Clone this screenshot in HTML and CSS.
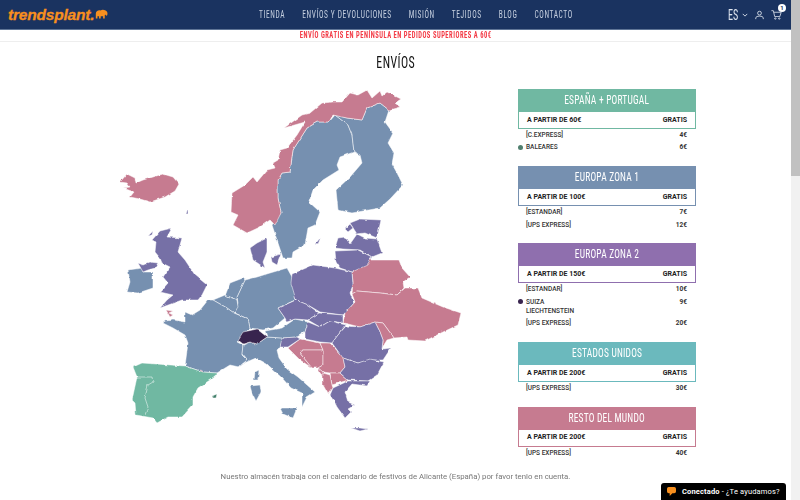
FILE: index.html
```html
<!DOCTYPE html>
<html lang="es">
<head>
<meta charset="utf-8">
<title>Envíos - trendsplant</title>
<link rel="stylesheet" href="styles.css">
</head>
<body>
<div class="shell">
<div class="page">
  <header class="topbar">
    <a class="logo"><span class="logo-text">trendsplant.</span>
      <svg class="logo-mark" viewBox="0 0 16 12"><path d="M1 5C1 2 4 0 7 1c1-1 4-1 6 0 2 1 3 3 2 6-1 1-2 0-2-1l-1 1v4h-2V8H7v3H5V8H3v3H1z"/></svg>
    </a>
    <nav class="nav">
      <a>TIENDA</a><a>ENVÍOS Y DEVOLUCIONES</a><a>MISIÓN</a><a>TEJIDOS</a><a>BLOG</a><a>CONTACTO</a>
    </nav>
    <div class="tools">
      <span class="lang">ES</span>
      <svg class="chev" viewBox="0 0 8 5"><path d="M1 1l3 3 3-3"/></svg>
      <svg class="user" viewBox="0 0 12 12"><circle cx="6" cy="3.5" r="2.5"/><path d="M1 11.5V10c0-1.500 2-2.500 5-2.500s5 1 5 2.500v1.500"/></svg>
      <span class="cart">
        <svg viewBox="0 0 14 13"><path d="M.5 1H3l1.700 7.500h6.500L13 3H3.500"/><circle cx="5.500" cy="11" r=".9"/><circle cx="10.500" cy="11" r=".9"/></svg>
        <b class="badge">1</b>
      </span>
    </div>
  </header>
  <div class="promo"><span>ENVÍO GRATIS EN PENÍNSULA EN PEDIDOS SUPERIORES A 60€</span></div>
  <h1 class="title"><span>ENVÍOS</span></h1>
  <main class="content">
    <svg class="map" viewBox="100 80 380 360" role="img" aria-label="Mapa de zonas de envío de Europa">
      <defs>
        <filter id="coast" x="0" y="0" width="100%" height="100%" color-interpolation-filters="sRGB">
          <feTurbulence type="fractalNoise" baseFrequency="0.16" numOctaves="2" seed="4"/>
          <feDisplacementMap in="SourceGraphic" scale="2.6" xChannelSelector="R" yChannelSelector="G"/>
        </filter>
      </defs>
      <g class="land">
      <g class="blue">
        <path d="M329 122L335 115L348 125L352 135L354 152L340 157L337 165L339 170L323 180L313 190L309 202L320 212L315 225L308 228L305 245L293 252L292 258L283 258L272 225L281 213L278 198L278 180L282 173L290 172L293 150L307 128L317 122Z"/>
        <path d="M335 115L347 118L362 120L367 108L380 103L389 110L385 122L393 133L388 143L394 153L392 164L397 173L403 185L390 199L380 208L352 213L338 210L336 190L350 177L362 163L360 155L354 152L352 135L348 125Z"/>
        <path d="M128 270L142 268L143 272L153 272L153 288L138 293L127 292L130 282Z"/>
        <path d="M257 277L270 273L287 268L292 277L296 293L295 300L278 308L285 318L273 328L263 330L250 328L248 319L235 313L238 303L237 297L245 280Z"/>
        <path d="M225 296L230 283L243 278L245 280L237 297L237 300L225 295Z"/>
        <path d="M213 300L225 295L237 300L238 307L234 313L227 308Z"/>
        <path d="M208 300L213 300L227 308L234 313L248 319L250 328L245 333L237 342L243 345L242 355L247 360L239 367L230 365L217 373L203 372L185 366L188 343L185 335L173 328L163 323L165 321L173 320L185 322L185 312L192 315L200 310Z"/>
        <path d="M243 345L250 342L257 344L267 337L283 338L280 347L277 350L279 358L287 369L298 377L315 392L307 397L302 407L302 393L291 388L282 378L267 364L256 358L242 364L240 367L247 360L242 354Z"/>
        <path d="M280 408L297 408L293 418L283 414Z"/>
        <path d="M250 386L260 385L261 392L256 401L252 393Z"/>
        <path d="M255 372L259 370L258 380L254 380Z"/>
        <path d="M265 331L282 328L295 319L308 322L305 332L297 337L282 338L267 337Z"/>
      </g>
      <g class="pink">
        <path d="M120 182L127 174L135 178L136 183L143 180L153 177L163 174L173 177L179 184L175 191L165 197L150 202L140 199L130 197L134 192L123 188L130 187L127 183Z"/>
        <path d="M233 225L247 233L260 227L270 220L275 225L281 213L278 198L278 180L282 173L290 172L293 150L307 128L317 122L329 122L333 115L347 118L362 120L367 108L380 103L389 110L400 107L395 103L401 99L387 92L382 96L380 91L372 98L367 90L358 95L350 93L342 102L333 102L322 103L310 113L302 115L284 128L305 122L297 135L287 148L280 150L278 160L273 163L275 168L267 170L257 182L253 177L245 185L232 193L231 212L238 215Z"/>
        <path d="M352 272L370 260L399 260L402 268L410 277L403 282L404 288L397 295L380 293L357 291L352 294L353 282Z"/>
        <path d="M357 291L380 293L397 295L405 288L418 288L422 298L443 307L461 313L458 325L443 332L425 341L408 340L407 337L394 338L383 323L375 322L360 327L348 324L343 323L345 313L355 302L352 294Z"/>
        <path d="M375 322L383 323L394 338L387 340L382 348L383 340L380 332Z"/>
        <path d="M300 339L320 343L323 350L303 350L299 352L312 368L300 360L288 348Z"/>
        <path d="M299 352L303 350L323 350L323 365L318 368L312 368Z"/>
        <path d="M320 343L330 343L343 357L345 367L340 373L330 373L323 372L318 368L323 365L323 350Z"/>
        <path d="M318 368L323 372L323 376L320 373Z"/>
        <path d="M330 373L340 373L348 380L332 385Z"/>
        <path d="M323 373L330 375L332 385L333 388L328 394L323 385Z"/>
        <path d="M166 310L173 311L169 313L173 315L170 317Z"/>
        <path d="M197 372L201 370L205 373L200 374Z"/>
      </g>
      <g class="purple">
        <path d="M350 223L360 219L381 220L377 238L365 233L357 234Z"/>
        <path d="M335 248L338 238L345 237L350 244L357 234L365 238L377 239L382 253L372 257L360 250L343 249Z"/>
        <path d="M335 251L358 250L372 257L367 265L352 272L340 268L336 262Z"/>
        <path d="M292 274L313 265L335 268L352 272L353 285L350 293L354 303L343 315L320 312L308 305L296 300L291 283Z"/>
        <path d="M278 308L296 300L308 305L319 313L308 320L295 319L287 322L285 318Z"/>
        <path d="M319 313L343 315L343 323L330 321L320 327L308 320Z"/>
        <path d="M308 322L320 327L330 321L346 325L338 335L332 343L320 342L305 339L305 332Z"/>
        <path d="M282 338L297 337L300 339L288 347L280 347Z"/>
        <path d="M346 326L360 327L375 322L380 332L383 340L382 349L391 348L383 360L370 360L358 363L343 358L332 343L338 335Z"/>
        <path d="M343 358L358 363L370 359L384 362L377 375L368 381L348 380L340 373L345 367Z"/>
        <path d="M330 395L333 388L348 381L370 381L367 386L352 384L345 392L348 402L355 405L348 409L351 412L345 418L337 407L335 403Z"/>
        <path d="M351 428L360 428L368 429L360 431Z"/>
        <path d="M156 242L152 240L160 231L172 228L167 237L182 238L178 252L185 260L195 275L207 285L202 295L198 300L182 300L160 308L167 300L173 295L160 292L168 283L163 277L170 267L162 263L160 258L155 252L156 242Z"/>
        <path d="M138 263L143 265L150 262L158 263L155 268L148 270L143 272Z"/>
        <path d="M250 248L257 243L267 238L267 252L263 262L265 268L253 260Z"/>
        <path d="M271 257L281 254L277 265L272 262Z"/>
        <path d="M348 232L345 229L350 224L353 228Z"/>
        <path d="M316 243L321 237L318 244Z"/>
        <path d="M148 236L153 231L152 235Z"/>
        <path d="M186 214L188 208L188 214Z"/>
      </g>
      <path class="green" d="M133 367L142 363L185 366L203 372L217 373L217 374L210 380L198 388L193 397L193 405L182 417L168 417L157 423L153 418L136 415L135 403L132 400L137 377Z"/>
      <path class="seam" d="M137 377L152 377L153 382L148 385L145 398L148 407L145 415"/>
      <path class="green-dark" d="M212 396L217 394L216 398L213 398Z"/>
      <path class="swiss" d="M238 340L243 332L257 329L267 337L257 344L250 342L243 344Z"/>
      </g>
    </svg>
    <aside class="zones">
      <section class="zone zone-green">
        <h2><span>ESPAÑA + PORTUGAL</span></h2>
        <div class="free"><span>A PARTIR DE 60€</span><span>GRATIS</span></div>
        <ul>
          <li><span>[C.EXPRESS]</span><b>4€</b></li>
          <li class="dotted dot-green"><span>BALEARES</span><b>6€</b></li>
        </ul>
      </section>
      <section class="zone zone-blue">
        <h2><span>EUROPA ZONA 1</span></h2>
        <div class="free"><span>A PARTIR DE 100€</span><span>GRATIS</span></div>
        <ul>
          <li><span>[ESTANDAR]</span><b>7€</b></li>
          <li><span>[UPS EXPRESS]</span><b>12€</b></li>
        </ul>
      </section>
      <section class="zone zone-purple">
        <h2><span>EUROPA ZONA 2</span></h2>
        <div class="free"><span>A PARTIR DE 150€</span><span>GRATIS</span></div>
        <ul>
          <li><span>[ESTANDAR]</span><b>10€</b></li>
          <li class="dotted dot-dark"><span>SUIZA<br>LIECHTENSTEIN</span><b>9€</b></li>
          <li><span>[UPS EXPRESS]</span><b>20€</b></li>
        </ul>
      </section>
      <section class="zone zone-teal">
        <h2><span>ESTADOS UNIDOS</span></h2>
        <div class="free"><span>A PARTIR DE 200€</span><span>GRATIS</span></div>
        <ul>
          <li><span>[UPS EXPRESS]</span><b>30€</b></li>
        </ul>
      </section>
      <section class="zone zone-pink">
        <h2><span>RESTO DEL MUNDO</span></h2>
        <div class="free"><span>A PARTIR DE 200€</span><span>GRATIS</span></div>
        <ul>
          <li><span>[UPS EXPRESS]</span><b>40€</b></li>
        </ul>
      </section>
    </aside>
  </main>
  <p class="note">Nuestro almacén trabaja con el calendario de festivos de Alicante (España) por favor tenlo en cuenta.</p>
</div>
<div class="scrollbar"><div class="thumb"></div></div>
</div>
<div class="chat">
  <svg viewBox="0 0 10 10"><path d="M2 0h6a2 2 0 0 1 2 2v3a2 2 0 0 1-2 2H6L3 10V7H2a2 2 0 0 1-2-2V2a2 2 0 0 1 2-2z"/></svg>
  <span><b>Conectado</b> - ¿Te ayudamos?</span>
</div>
</body>
</html>
```
FILE: styles.css
```css
* { box-sizing: border-box; }
html, body { margin: 0; height: 100%; overflow: hidden; background: #fff; }
body { font-family: Roboto, "Liberation Sans", sans-serif; color: #222; }
.shell { display: flex; height: 500px; }
.page { flex: 1; min-width: 0; overflow: hidden; }
.scrollbar { width: 9px; background: #f1f1f1; }
.thumb { height: 176px; background: #c1c1c1; }

.topbar { height: 30px; background: #1a3360; border-bottom: 1px solid #5f7596; display: flex; align-items: center; padding: 0 9px 0 8px; position: relative; }
.logo { display: flex; align-items: center; gap: 1px; width: 240px; }
.logo-text { font: italic 700 15.500px/1 "Liberation Sans", sans-serif; color: #f78f1e; letter-spacing: -.2px; -webkit-text-stroke: .3px #f78f1e; }
.logo-mark { width: 13px; height: 11px; fill: #f78f1e; }
.nav { display: flex; gap: 24px; margin: 1px 0 0 11px; white-space: nowrap; transform: scaleX(.71); transform-origin: left center; }
.nav a { font: 400 10.500px/1 Roboto, sans-serif; font-stretch: 75%; color: #c6d0e0; letter-spacing: .85px; }
.tools { margin-left: auto; display: flex; align-items: center; color: #fff; }
.lang { font: 400 14px/1 Roboto, sans-serif; font-stretch: 75%; color: #dde4ee; transform: scaleX(.72); transform-origin: left center; margin: 1px -3.800px 0 0; }
.chev { width: 6px; height: 4px; margin-left: 4px; fill: none; stroke: #dde4ee; stroke-width: 1.200; }
.user { width: 9px; height: 10px; margin-left: 7px; fill: none; stroke: #e6ebf3; stroke-width: 1.100; }
.cart { position: relative; display: block; width: 11px; height: 12px; margin-left: 7px; }
.cart svg { display: block; width: 11px; height: 12px; fill: none; stroke: #e6ebf3; stroke-width: 1; }
.badge { position: absolute; right: -4px; top: -5px; width: 8px; height: 8px; border-radius: 50%; background: #fff; color: #1a3360; font: 700 6px/8px Roboto, sans-serif; text-align: center; }

.promo { height: 12px; border-bottom: 1px solid #eee; text-align: center; font: 700 8.500px/11px Roboto, sans-serif; font-stretch: 75%; color: #f33a45; letter-spacing: .65px; white-space: nowrap; }
.promo span { display: inline-block; transform: scaleX(.77); }
.title { margin: 12px 0 0; height: 19px; text-align: center; font: 400 17px/17px Roboto, sans-serif; font-stretch: 75%; color: #111; letter-spacing: .6px; }
.title span { display: inline-block; transform: scaleX(.7); }
.content { display: flex; align-items: flex-start; padding-left: 100px; }
.map { display: block; width: 380px; height: 360px; margin-top: 7px; flex: none; }
.land { filter: url(#coast); }
.map path { stroke: #fff; stroke-width: .5; stroke-linejoin: round; }
.blue path { fill: #7690b0; }
.pink path { fill: #c67b90; }
.purple path { fill: #7670a6; }
.green { fill: #70b8a2; }
.green-dark { fill: #3f7d68; }
.map .seam { fill: none; stroke: #fff; }
.swiss { fill: #38244e; }

.zones { width: 178px; margin: 16px 0 0 38px; display: flex; flex-direction: column; gap: 13.300px; }
.zone h2 { margin: 0; height: 23px; font: 400 13.500px/21px Roboto, sans-serif; font-stretch: 75%; color: #fff; text-align: center; letter-spacing: .3px; white-space: nowrap; overflow: hidden; }
.zone h2 span { display: inline-block; transform: scaleX(.7); }
.free { height: 17px; padding: 0 8px 1px; display: flex; justify-content: space-between; align-items: center; border: 1px solid; border-top: 0; font-size: 7px; font-weight: 700; color: #222; background: #fff; }
.zone ul { list-style: none; margin: 0; padding: 0; }
.zone li { display: flex; justify-content: space-between; padding: 3px 9px 0 8px; line-height: 9.400px; font-size: 6.500px; font-weight: 500; color: #333; position: relative; }
.zone li:first-child { padding-top: 2px; }
.zone li b { font-weight: 700; }
.zone li.dotted::before { content: ""; position: absolute; left: 0; top: 4.500px; width: 5px; height: 5px; border-radius: 50%; }
.dot-green::before { background: #4f7f6e; }
.dot-dark::before { background: #38244e; }
.zone-green h2 { background: #70b8a2; } .zone-green .free { border-color: #70b8a2; }
.zone-blue h2 { background: #7690b0; } .zone-blue .free { border-color: #7690b0; }
.zone-purple h2 { background: #8f6fae; } .zone-purple .free { border-color: #8f6fae; }
.zone-teal h2 { background: #6bb9bd; } .zone-teal .free { border-color: #6bb9bd; }
.zone-pink h2 { background: #c67b90; } .zone-pink .free { border-color: #c67b90; }

.note { margin: 13px 0 0; text-align: center; font-size: 7.800px; line-height: 12px; color: #777; will-change: transform; }
.chat { position: absolute; left: 661px; bottom: 0; width: 125px; height: 17px; background: #000; border-radius: 3px 3px 0 0; color: #fff; display: flex; align-items: center; gap: 6px; padding-left: 6px; font-size: 7.500px; letter-spacing: .15px; }
.chat svg { width: 9px; height: 9px; fill: #f78f1e; }
```
